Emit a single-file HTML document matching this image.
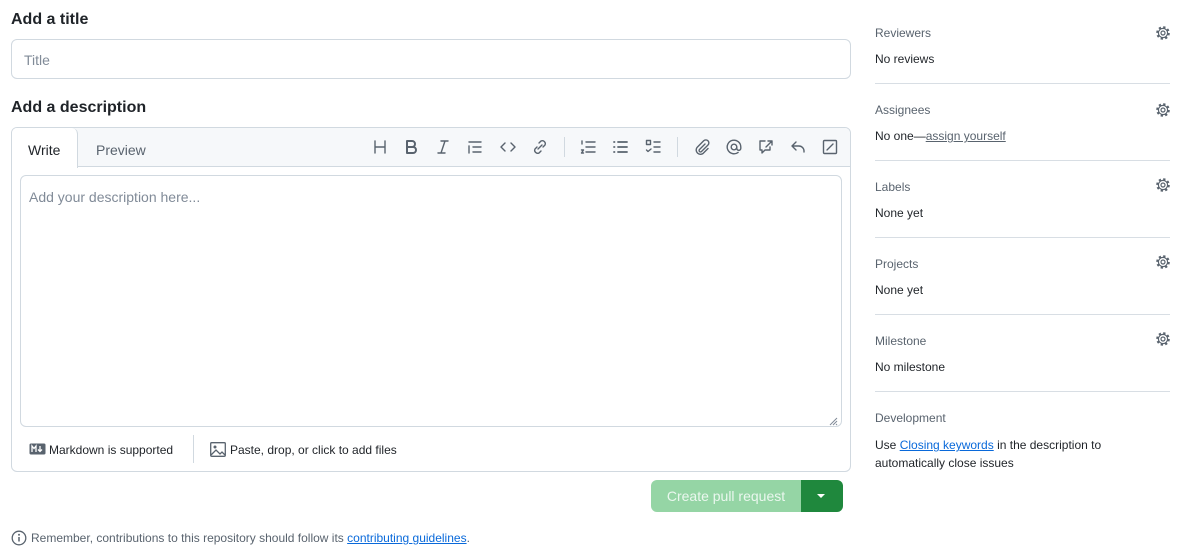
<!DOCTYPE html>
<html><head><meta charset="utf-8"><style>
*{box-sizing:border-box;margin:0;padding:0}
body{width:1200px;height:560px;background:#fff;font-family:"Liberation Sans",sans-serif;color:#1f2328;position:relative;overflow:hidden}
.a{position:absolute}
h2{position:absolute;font-size:16px;font-weight:bold;left:11px}
.ic{position:absolute;top:139px;width:16px;height:16px}
.ic svg{width:16px;height:16px;fill:none;stroke:#59636e;stroke-width:1.4;stroke-linecap:round;stroke-linejoin:round}
.lbl{position:absolute;left:875px;font-size:12px;color:#59636e}
.val{position:absolute;left:875px;font-size:12px;color:#1f2328}
.hr{position:absolute;left:875px;width:295px;height:1px;background:#d8dee4}
.gear{position:absolute;left:1155px;width:16px;height:16px}
a{color:#0969da;text-decoration:underline}
</style></head><body>
<h2 style="top:11px">Add a title</h2>
<div class="a" style="left:11px;top:39px;width:840px;height:40px;border:1px solid #d1d9e0;border-radius:6px"></div>
<div class="a" style="left:24px;top:52px;font-size:14px;color:#818b98">Title</div>
<h2 style="top:99px">Add a description</h2>
<div class="a" style="left:11px;top:127px;width:840px;height:345px;border:1px solid #d1d9e0;border-radius:6px;overflow:hidden">
 <div class="a" style="left:0;top:0;width:838px;height:39px;background:#f6f8fa;border-bottom:1px solid #d1d9e0"></div>
 <div class="a" style="left:0;top:0;width:66px;height:40px;background:#fff;border-right:1px solid #d1d9e0;border-top-right-radius:6px"></div>
 <div class="a" style="left:16px;top:14px;font-size:14px">Write</div>
 <div class="a" style="left:84px;top:14px;font-size:14px;color:#59636e">Preview</div>
 <div class="a" style="left:8px;top:47px;width:822px;height:252px;border:1px solid #d1d9e0;border-radius:6px"></div>
 <div class="a" style="left:17px;top:61px;font-size:14px;color:#818b98">Add your description here...</div>
 <svg class="a" style="left:816px;top:288px" width="10" height="10"><path d="M9 2L2 9M9 5L5 9M9 8L8 9" stroke="#818b98" stroke-width="1"/></svg>
 <div class="a" style="left:181px;top:307px;width:1px;height:28px;background:#d1d9e0"></div>
</div>
<svg class="a" style="left:29px;top:443px" width="17" height="12"><rect x="0.5" y="0.5" width="16" height="11" rx="1.5" fill="#59636e"/><path d="M3 9V3l2 2.5L7 3v6M11 3v5M9 6.5l2 2 2-2" stroke="#fff" stroke-width="1.3" fill="none"/></svg>
<div class="a" style="left:49px;top:443px;font-size:12px">Markdown is supported</div>
<svg class="a" style="left:210px;top:442px" width="16" height="15"><rect x="0.7" y="0.7" width="14.6" height="13.6" rx="1" fill="none" stroke="#59636e" stroke-width="1.3"/><circle cx="5" cy="5" r="1.5" fill="#59636e"/><path d="M1 13l5-5 4 4 2-2 3 3" fill="none" stroke="#59636e" stroke-width="1.3"/></svg>
<div class="a" style="left:230px;top:443px;font-size:12px">Paste, drop, or click to add files</div>

<div class="ic" style="left:372px"><svg viewBox="0 0 16 16"><path d="M3 2v12M13 2v12M3 8h10"/></svg></div>
<div class="ic" style="left:403px"><svg viewBox="0 0 16 16" style="stroke-width:2"><path d="M4 2h5a3 3 0 010 6H4zM4 8h6a3 3 0 010 6H4z"/></svg></div>
<div class="ic" style="left:435px"><svg viewBox="0 0 16 16"><path d="M6 2h7M3 14h7M10 2L6 14"/></svg></div>
<div class="ic" style="left:467px"><svg viewBox="0 0 16 16"><path d="M2 3h12M6 8h8M6 13h8M2 7v7"/></svg></div>
<div class="ic" style="left:500px"><svg viewBox="0 0 16 16"><path d="M5 4L1 8l4 4M11 4l4 4-4 4"/></svg></div>
<div class="ic" style="left:532px"><svg viewBox="0 0 16 16"><path d="M7 4l2-2a3 3 0 014 4l-2 2M9 12l-2 2a3 3 0 01-4-4l2-2M6 10l4-4"/></svg></div>
<div class="a" style="left:564px;top:137px;width:1px;height:20px;background:#d1d9e0"></div>
<div class="ic" style="left:580px"><svg viewBox="0 0 16 16"><path d="M6 3h9M6 8h9M6 13h9M2 2v3M1.5 11h2L1.5 14h2"/></svg></div>
<div class="ic" style="left:612px"><svg viewBox="0 0 16 16"><path d="M6 3h9M6 8h9M6 13h9M2 3h.5M2 8h.5M2 13h.5" style="stroke-width:1.8"/></svg></div>
<div class="ic" style="left:645px"><svg viewBox="0 0 16 16"><rect x="1.5" y="1.5" width="4" height="4"/><path d="M9 3h6M9 8h6M9 13h6M1.5 11l1.5 1.5L6 10"/></svg></div>
<div class="a" style="left:677px;top:137px;width:1px;height:20px;background:#d1d9e0"></div>
<div class="ic" style="left:694px"><svg viewBox="0 0 16 16"><path d="M11 5L5.5 10.5a1.4 1.4 0 002 2L14 6a3 3 0 00-4.3-4.2L3 8.5a4.3 4.3 0 006 6L14 9.5"/></svg></div>
<div class="ic" style="left:726px"><svg viewBox="0 0 16 16"><circle cx="8" cy="8" r="2.8"/><path d="M10.8 8v1.3a2 2 0 004 0V8a6.8 6.8 0 10-2.7 5.4"/></svg></div>
<div class="ic" style="left:758px"><svg viewBox="0 0 16 16"><path d="M7 2H2v9h2v3l3-3h5V8M10 2h4v4M14 2L8 8"/></svg></div>
<div class="ic" style="left:790px"><svg viewBox="0 0 16 16"><path d="M6 3L2 7l4 4M2 7h7a5 5 0 015 5v1"/></svg></div>
<div class="ic" style="left:822px"><svg viewBox="0 0 16 16"><rect x="1.5" y="1.5" width="13" height="13" rx="1"/><path d="M5 11l6-6"/></svg></div>

<div class="a" style="left:651px;top:480px;width:150px;height:32px;background:#95d5a5;border-radius:6px 0 0 6px;color:#eaf7ee;font-size:14px;text-align:center;line-height:32px">Create pull request</div>
<div class="a" style="left:801px;top:480px;width:42px;height:32px;background:#1f883d;border-radius:0 6px 6px 0"></div>
<div class="a" style="left:817px;top:494px;border-left:4px solid transparent;border-right:4px solid transparent;border-top:4px solid #fff"></div>

<svg class="a" style="left:11px;top:530px" width="16" height="16" viewBox="0 0 16 16"><circle cx="8" cy="8" r="6.8" fill="none" stroke="#59636e" stroke-width="1.3"/><path d="M8 7v4.5" stroke="#59636e" stroke-width="1.5"/><circle cx="8" cy="4.8" r="1" fill="#59636e"/></svg>
<div class="a" style="left:31px;top:531px;font-size:12px;color:#59636e">Remember, contributions to this repository should follow its <a>contributing guidelines</a>.</div>

<div class="lbl" style="top:26px">Reviewers</div><div class="val" style="top:52px">No reviews</div><div class="hr" style="top:83px"></div>
<div class="lbl" style="top:103px">Assignees</div><div class="val" style="top:129px">No one—<span style="color:#59636e;text-decoration:underline">assign yourself</span></div><div class="hr" style="top:160px"></div>
<div class="lbl" style="top:180px">Labels</div><div class="val" style="top:206px">None yet</div><div class="hr" style="top:237px"></div>
<div class="lbl" style="top:257px">Projects</div><div class="val" style="top:283px">None yet</div><div class="hr" style="top:314px"></div>
<div class="lbl" style="top:334px">Milestone</div><div class="val" style="top:360px">No milestone</div><div class="hr" style="top:391px"></div>
<div class="lbl" style="top:411px">Development</div>
<div class="val" style="top:436px;line-height:18px;width:260px">Use <a>Closing keywords</a> in the description to automatically close issues</div>

<svg class="gear" style="top:25px" viewBox="0 0 16 16"><circle cx="8" cy="8" r="5.6" fill="none" stroke="#59636e" stroke-width="2.4" stroke-dasharray="2.2 2.2"/><circle cx="8" cy="8" r="4.6" fill="#fff" stroke="#59636e" stroke-width="1.2"/><circle cx="8" cy="8" r="2" fill="none" stroke="#59636e" stroke-width="1.2"/></svg>
<svg class="gear" style="top:102px" viewBox="0 0 16 16"><circle cx="8" cy="8" r="5.6" fill="none" stroke="#59636e" stroke-width="2.4" stroke-dasharray="2.2 2.2"/><circle cx="8" cy="8" r="4.6" fill="#fff" stroke="#59636e" stroke-width="1.2"/><circle cx="8" cy="8" r="2" fill="none" stroke="#59636e" stroke-width="1.2"/></svg>
<svg class="gear" style="top:177px" viewBox="0 0 16 16"><circle cx="8" cy="8" r="5.6" fill="none" stroke="#59636e" stroke-width="2.4" stroke-dasharray="2.2 2.2"/><circle cx="8" cy="8" r="4.6" fill="#fff" stroke="#59636e" stroke-width="1.2"/><circle cx="8" cy="8" r="2" fill="none" stroke="#59636e" stroke-width="1.2"/></svg>
<svg class="gear" style="top:254px" viewBox="0 0 16 16"><circle cx="8" cy="8" r="5.6" fill="none" stroke="#59636e" stroke-width="2.4" stroke-dasharray="2.2 2.2"/><circle cx="8" cy="8" r="4.6" fill="#fff" stroke="#59636e" stroke-width="1.2"/><circle cx="8" cy="8" r="2" fill="none" stroke="#59636e" stroke-width="1.2"/></svg>
<svg class="gear" style="top:331px" viewBox="0 0 16 16"><circle cx="8" cy="8" r="5.6" fill="none" stroke="#59636e" stroke-width="2.4" stroke-dasharray="2.2 2.2"/><circle cx="8" cy="8" r="4.6" fill="#fff" stroke="#59636e" stroke-width="1.2"/><circle cx="8" cy="8" r="2" fill="none" stroke="#59636e" stroke-width="1.2"/></svg>
</body></html>
